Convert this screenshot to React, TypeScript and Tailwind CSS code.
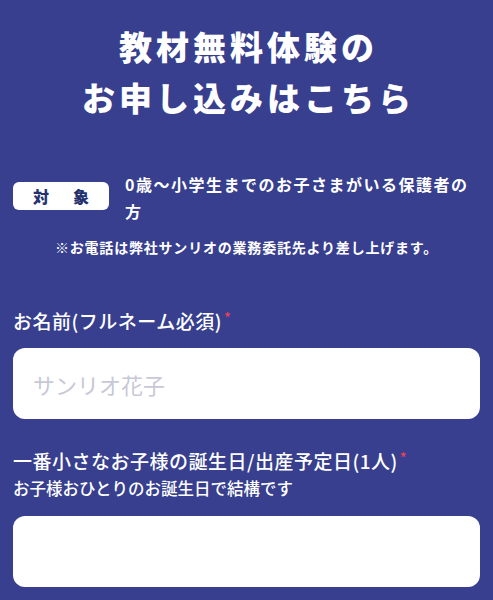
import React from 'react';

const font = "font-['Noto_Sans_CJK_JP','Noto_Sans',sans-serif]";

const Required = () => <span className="relative -top-[6px] ml-[2px] text-[14px] text-[#e8435a]">*</span>;

export default function App() {
    return (
        <div className={`${font} min-h-[600px] w-full bg-[#373f8e] px-[13px] pt-[21px] text-white`}>
            {/* heading */}
            <h1 className="text-center text-[33px] leading-[51px] font-black tracking-[4px] pl-[4px]">
                教材無料体験の
                <br />
                お申し込みはこちら
            </h1>

            {/* target */}
            <div className="mt-[48px] flex items-start gap-[16px] pr-[10px]">
                <span className="mt-[11px] flex h-[28px] w-[96px] shrink-0 items-center justify-center rounded-[6px] bg-white text-[16px] font-black text-[#25306e]">
                    対<span className="w-[24px]" />象
                </span>
                <p className="text-[16px] leading-[27px] font-bold tracking-[1.5px]">0歳〜小学生までのお子さまがいる保護者の方</p>
            </div>
            <p className="mt-[12px] text-center text-[14px] leading-[20px] font-bold tracking-[0.8px]">
                ※お電話は弊社サンリオの業務委託先より差し上げます。
            </p>

            {/* name */}
            <label className="mt-[51px] block text-[19px] leading-[26px] font-medium tracking-[0.5px]">
                お名前(フルネーム必須)
                <Required />
            </label>
            <input
                type="text"
                placeholder="サンリオ花子"
                className="mt-[12px] block h-[71px] w-full rounded-[12px] bg-white px-[20px] text-[22px] text-[#333] outline-none placeholder:text-[#c8c8d6]"
            />

            {/* birthday */}
            <label className="mt-[29px] block text-[19px] leading-[26px] font-medium tracking-[0.5px]">
                一番小さなお子様の誕生日/出産予定日(1人)
                <Required />
            </label>
            <p className="text-[16.5px] leading-[24px] font-medium">お子様おひとりのお誕生日で結構です</p>
            <input
                type="text"
                className="mt-[16px] block h-[71px] w-full rounded-[12px] bg-white px-[20px] text-[22px] text-[#333] outline-none"
            />
        </div>
    );
}
